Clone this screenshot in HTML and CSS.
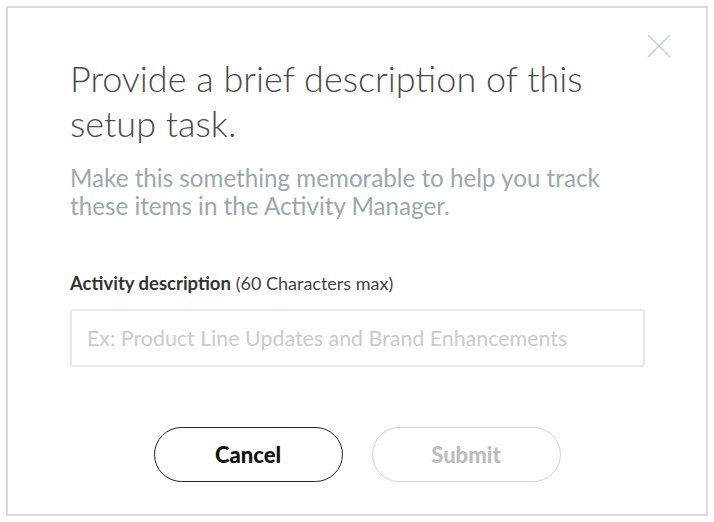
FILE: index.html
```html
<!DOCTYPE html>
<html>
<head>
<meta charset="utf-8">
<link rel="stylesheet" href="styles.css">
</head>
<body>
<div class="dialog">
  <button class="close" aria-label="Close">
    <svg width="24" height="24" viewBox="0 0 24 24"><path d="M1 1 L23 23 M23 1 L1 23" stroke="#c9d1d2" stroke-width="1.6" fill="none"/></svg>
  </button>
  <h1 class="title">Provide a brief description of this setup task.</h1>
  <p class="subtitle">Make this something memorable to help you track these items in the Activity Manager.</p>
  <label class="label"><span class="label-strong">Activity description</span> <span class="label-note">(60 Characters max)</span></label>
  <div class="input">Ex: Product Line Updates and Brand Enhancements</div>
  <div class="actions">
    <button class="btn btn-cancel">Cancel</button>
    <button class="btn btn-submit">Submit</button>
  </div>
</div>
</body>
</html>
```
FILE: styles.css
```css
* { box-sizing: border-box; }
html, body { margin: 0; background: #fff; }
body { padding: 6px; font-family: "Lato", "Open Sans", sans-serif; }
.dialog {
  position: relative;
  width: 702px;
  height: 510px;
  border: 2px solid #dcdcdc;
  padding: 48px 61px 0 62px;
  display: flex;
  flex-direction: column;
}
.close {
  position: absolute;
  top: 26px;
  right: 35px;
  padding: 0;
  border: 0;
  background: none;
  width: 24px;
  height: 24px;
}
.title {
  margin: 0;
  font-weight: 300;
  font-size: 36px;
  line-height: 45px;
  color: #4a4a4a;
  width: 560px;
}
.subtitle {
  margin: 18px 0 0;
  font-size: 24.2px;
  line-height: 28px;
  color: #9aa9ad;
  width: 545px;
}
.label {
  margin-top: 53px;
  font-size: 18.5px;
  line-height: 20px;
  color: #333;
}
.label-strong { font-weight: 700; }
.label-note { font-size: 18px; color: #444; }
.input {
  margin-top: 16px;
  height: 58px;
  border: 2px solid #e6e8e9;
  border-radius: 3px;
  padding: 0 15px;
  display: flex;
  align-items: center;
  font-size: 21.4px;
  color: #c8cccd;
}
.actions {
  margin-top: 60px;
  display: flex;
  justify-content: center;
  gap: 29px;
  padding-right: 1px;
}
.btn {
  width: 189px;
  height: 55px;
  border-radius: 28px;
  background: #fff;
  font-family: "Lato", sans-serif;
  font-weight: 900;
  font-size: 22px;
}
.btn-cancel { border: 1.5px solid #222; color: #111; }
.btn-submit { border: 1.5px solid #d4d4d4; color: #bdbdbd; }
```
